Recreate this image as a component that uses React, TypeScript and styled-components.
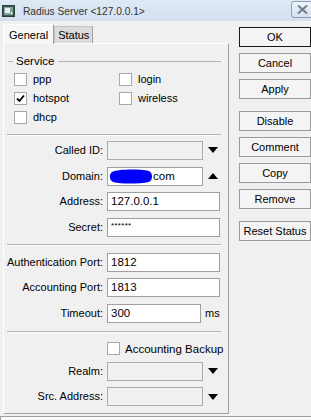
import React from "react";
import styled, { createGlobalStyle } from "styled-components";

const Global = createGlobalStyle`
  html, body { margin: 0; padding: 0; background: #f0f0f0; }
  body { font-family: "Liberation Sans", Arial, sans-serif; font-size: 11px; color: #000; }
`;

const Window = styled.div`
  width: 311px;
  height: 420px;
  background: #f0f0f0;
  display: flex;
  flex-direction: column;
  overflow: hidden;
`;

const TitleBar = styled.div`
  height: 21px;
  flex: none;
  display: flex;
  align-items: center;
  background: linear-gradient(#dfe9f5, #d3e0ef);
  padding-left: 2px;
`;

const TitleText = styled.span`
  margin-left: 8px;
  font-size: 10.2px;
  color: #333;
  flex: 1;
  padding-top: 1px;
`;

const CloseBtn = styled.div`
  width: 20px;
  height: 15px;
  margin-top: -3px;
  margin-right: -2px;
  border: 1px solid #8d9db5;
  border-radius: 3px;
  background: linear-gradient(#eef3f9, #d6e0ec);
  display: flex;
  align-items: center;
  justify-content: center;
`;

const Main = styled.div`
  flex: 1;
  display: flex;
  flex-direction: row;
`;

const LeftCol = styled.div`
  width: 226px;
  margin-left: 3px;
  display: flex;
  flex-direction: column;
`;

const TabsRow = styled.div`
  height: 21px;
  display: flex;
  align-items: flex-end;
  padding-top: 1px;
`;

const Tab = styled.div<{ $active?: boolean }>`
  height: ${(p) => (p.$active ? 20 : 17)}px;
  box-sizing: border-box;
  padding: 0 ${(p) => (p.$active ? 5 : 3)}px;
  display: flex;
  align-items: center;
  font-size: 11px;
  background: ${(p) => (p.$active ? "#f7f7f7" : "#dcdcdc")};
  border-top: 1px solid ${(p) => (p.$active ? "#ffffff" : "#c4c4c4")};
  border-left: 1px solid ${(p) => (p.$active ? "#ffffff" : "#c4c4c4")};
  border-right: 1px solid #a0a0a0;
  margin-bottom: ${(p) => (p.$active ? -1 : 0)}px;
  position: relative;
  z-index: ${(p) => (p.$active ? 1 : 0)};
`;

const Panel = styled.div`
  height: 371px;
  box-sizing: border-box;
  border-top: 1px solid #ffffff;
  border-left: 1px solid #ffffff;
  border-right: 1px solid #a0a0a0;
  border-bottom: 1px solid #a0a0a0;
  padding: 11px 7px 0 2px;
  display: flex;
  flex-direction: column;
`;

const GroupHead = styled.div`
  height: 13px;
  display: flex;
  align-items: center;
  padding-left: 2px;
`;

const GroupLine = styled.div<{ $w?: number }>`
  height: 0;
  border-top: 1px solid #b4b4b4;
  width: ${(p) => (p.$w ? `${p.$w}px` : "auto")};
  flex: ${(p) => (p.$w ? "none" : 1)};
`;

const GroupLabel = styled.span`
  margin: 0 4px 0 3px;
  font-size: 11.5px;
`;

const CheckGrid = styled.div`
  display: grid;
  grid-template-columns: 105px 100px;
  grid-auto-rows: 19px;
  padding: 2px 0 0 8px;
`;

const CheckItem = styled.label`
  display: flex;
  align-items: center;
  gap: 6px;
  font-size: 11px;
`;

const Box = styled.span`
  width: 11px;
  height: 11px;
  border: 1px solid #a8a8a8;
  background: #fff;
  display: inline-flex;
  align-items: center;
  justify-content: center;
  flex: none;
`;

const Separator = styled.div<{ $top: number; $bottom: number }>`
  margin: ${(p) => p.$top}px 0 ${(p) => p.$bottom}px 1px;
  border-top: 1px solid #b4b4b4;
  border-bottom: 1px solid #fbfbfb;
`;

const FieldRow = styled.div`
  height: 26px;
  display: flex;
  align-items: flex-start;
`;

const Label = styled.div`
  width: 97px;
  text-align: right;
  height: 19px;
  line-height: 19px;
  font-size: 11px;
  flex: none;
  padding-right: 1px;
  white-space: nowrap;
`;

const Input = styled.div<{ $w: number; $disabled?: boolean }>`
  width: ${(p) => p.$w}px;
  height: 19px;
  box-sizing: border-box;
  margin-left: 3px;
  border: 1px solid ${(p) => (p.$disabled ? "#ababab" : "#a0a0a0")};
  background: ${(p) => (p.$disabled ? "#f0f0f0" : "#ffffff")};
  font-size: 11.5px;
  line-height: 17px;
  padding-left: 3px;
  display: flex;
  align-items: center;
  flex: none;
  overflow: hidden;
  white-space: nowrap;
`;

const Arrow = styled.div`
  width: 14px;
  height: 19px;
  margin-left: 3px;
  display: flex;
  align-items: center;
  justify-content: center;
`;

const Unit = styled.span`
  margin-left: 4px;
  line-height: 19px;
  font-size: 11px;
`;

const Stars = styled.span`
  font-size: 8px;
  letter-spacing: 0.3px;
  margin-top: -4px;
`;

const BackupRow = styled.div`
  height: 18px;
  display: flex;
  align-items: center;
  padding-left: 101px;
  margin-bottom: 4px;
  gap: 5px;
  font-size: 11.5px;
  white-space: nowrap;
`;

const ButtonCol = styled.div`
  margin-left: 10px;
  padding-top: 6px;
  display: flex;
  flex-direction: column;
`;

const Button = styled.div<{ $primary?: boolean; $gapAfter?: number }>`
  width: 72px;
  height: 20px;
  box-sizing: border-box;
  border: 1px solid ${(p) => (p.$primary ? "#1a1a1a" : "#9a9a9a")};
  background: #f4f4f4;
  display: flex;
  align-items: center;
  justify-content: center;
  font-size: 11px;
  margin-bottom: ${(p) => p.$gapAfter ?? 6}px;
`;

const StatusBar = styled.div`
  height: 5px;
  margin-top: 2px;
  border-top: 1px solid #a0a0a0;
  border-left: 1px solid #a0a0a0;
  background: #f8f8f8;
`;

const Down = () => (
  <svg width="10" height="6" viewBox="0 0 10 6">
    <path d="M0 0 H10 L5 6 Z" fill="#000" />
  </svg>
);
const Up = () => (
  <svg width="10" height="6" viewBox="0 0 10 6">
    <path d="M0 6 H10 L5 0 Z" fill="#000" />
  </svg>
);

const Check = () => (
  <svg width="9" height="9" viewBox="0 0 9 9">
    <path d="M1 4.5 L3.5 7 L8 1.5" stroke="#000" strokeWidth="1.8" fill="none" />
  </svg>
);

const AppIcon = () => (
  <svg width="13" height="12" viewBox="0 0 13 12">
    <rect x="0.5" y="0.5" width="12" height="11" fill="#3f5a55" stroke="#2c3f3c" />
    <rect x="2" y="2" width="9" height="8" fill="#7fa39a" />
    <rect x="3" y="3" width="5" height="5" fill="#e8f0ee" />
    <rect x="9" y="7" width="1" height="2" fill="#fff" />
  </svg>
);

const CloseX = () => (
  <svg width="11" height="9" viewBox="0 0 11 9">
    <path d="M1 0.5 L10 8.5 M10 0.5 L1 8.5" stroke="#6f7f95" strokeWidth="2" />
  </svg>
);

const Blob = () => (
  <svg width="44" height="15" viewBox="0 0 44 15" style={{ flex: "none", marginLeft: -2 }}>
    <path
      d="M3 3 C10 0 30 0 40 2 C44 4 44 11 40 13 C30 15 12 15 4 13 C0 11 0 5 3 3 Z"
      fill="#0000ff"
    />
  </svg>
);

type Field = {
  label: string;
  value?: React.ReactNode;
  w: number;
  disabled?: boolean;
  arrow?: "down" | "up";
  unit?: string;
};

const Row = ({ f }: { f: Field }) => (
  <FieldRow>
    <Label>{f.label}</Label>
    <Input $w={f.w} $disabled={f.disabled}>
      {f.value}
    </Input>
    {f.arrow && <Arrow>{f.arrow === "down" ? <Down /> : <Up />}</Arrow>}
    {f.unit && <Unit>{f.unit}</Unit>}
  </FieldRow>
);

export default function App() {
  const group1: Field[] = [
    { label: "Called ID:", w: 96, disabled: true, arrow: "down" },
    {
      label: "Domain:",
      w: 96,
      arrow: "up",
      value: (
        <>
          <Blob />
          <span>com</span>
        </>
      ),
    },
    { label: "Address:", w: 113, value: "127.0.0.1" },
    { label: "Secret:", w: 113, value: <Stars>******</Stars> },
  ];
  const group2: Field[] = [
    { label: "Authentication Port:", w: 113, value: "1812" },
    { label: "Accounting Port:", w: 113, value: "1813" },
    { label: "Timeout:", w: 94, value: "300", unit: "ms" },
  ];
  const group3: Field[] = [
    { label: "Realm:", w: 96, disabled: true, arrow: "down" },
    { label: "Src. Address:", w: 96, disabled: true, arrow: "down" },
  ];

  return (
    <Window>
      <Global />
      <TitleBar>
        <AppIcon />
        <TitleText>Radius Server &lt;127.0.0.1&gt;</TitleText>
        <CloseBtn>
          <CloseX />
        </CloseBtn>
      </TitleBar>
      <Main>
        <LeftCol>
          <TabsRow>
            <Tab $active>General</Tab>
            <Tab>Status</Tab>
          </TabsRow>
          <Panel>
            <GroupHead>
              <GroupLine $w={5} />
              <GroupLabel>Service</GroupLabel>
              <GroupLine />
            </GroupHead>
            <CheckGrid>
              <CheckItem>
                <Box />
                ppp
              </CheckItem>
              <CheckItem>
                <Box />
                login
              </CheckItem>
              <CheckItem>
                <Box>
                  <Check />
                </Box>
                hotspot
              </CheckItem>
              <CheckItem>
                <Box />
                wireless
              </CheckItem>
              <CheckItem>
                <Box />
                dhcp
              </CheckItem>
            </CheckGrid>
            <Separator $top={7} $bottom={5} />
            {group1.map((f) => (
              <Row key={f.label} f={f} />
            ))}
            <Separator $top={0} $bottom={7} />
            {group2.map((f) => (
              <Row key={f.label} f={f} />
            ))}
            <Separator $top={1} $bottom={7} />
            <BackupRow>
              <Box />
              Accounting Backup
            </BackupRow>
            {group3.map((f) => (
              <Row key={f.label} f={f} />
            ))}
          </Panel>
        </LeftCol>
        <ButtonCol>
          <Button $primary>OK</Button>
          <Button>Cancel</Button>
          <Button $gapAfter={12}>Apply</Button>
          <Button>Disable</Button>
          <Button>Comment</Button>
          <Button>Copy</Button>
          <Button $gapAfter={12}>Remove</Button>
          <Button>Reset Status</Button>
        </ButtonCol>
      </Main>
      <StatusBar />
    </Window>
  );
}
